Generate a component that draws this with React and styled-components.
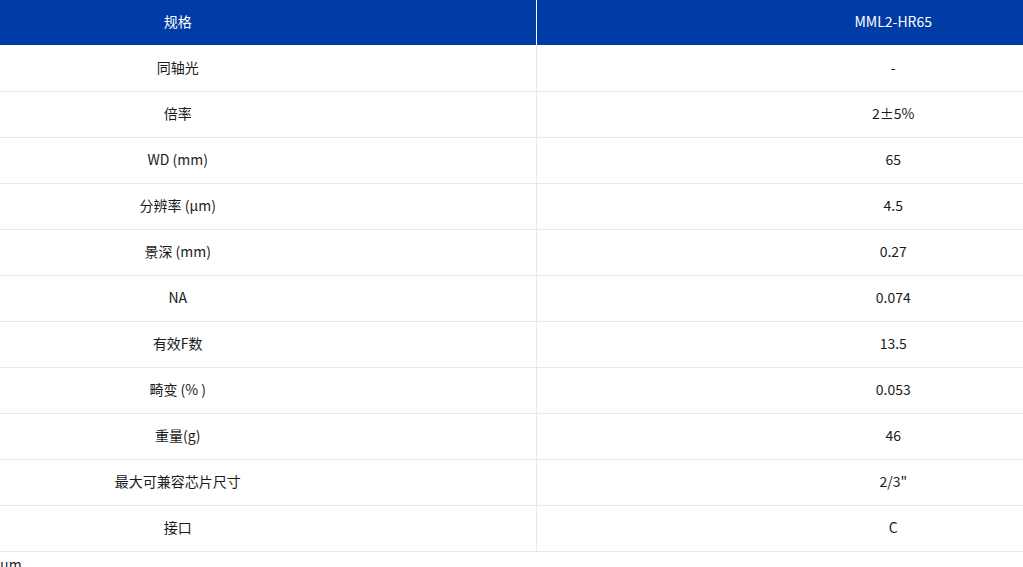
import React from "react";
import styled, { createGlobalStyle } from "styled-components";

const Global = createGlobalStyle`
  html, body { margin: 0; padding: 0; background: #fff; overflow: hidden; }
  body { font-family: "Noto Sans CJK SC", "Noto Sans", sans-serif; color: #222; }
`;

const Page = styled.div`
  width: 1023px;
  height: 567px;
  overflow: hidden;
`;

const Table = styled.table`
  width: 1430px;
  margin-left: -180px;
  border-collapse: collapse;
  table-layout: fixed;
  font-size: 14px;
  line-height: 20px;
`;

const HeadRow = styled.tr`
  border-bottom: 1px solid #fff;
`;

const HeadCell = styled.th`
  height: 42px;
  padding: 0 0 3px;
  background: #003ca5;
  color: #fff;
  font-weight: 400;
  text-align: center;
  border-left: ${(p) => (p.$first ? "none" : "1px solid #fff")};
`;

const Row = styled.tr`
  border-bottom: 1px solid #e8e8e8;
`;

const Cell = styled.td`
  height: 42px;
  padding: 0 0 3px;
  text-align: center;
  color: #1a1a1a;
  border-left: ${(p) => (p.$first ? "none" : "1px solid #e8e8e8")};
`;

const Note = styled.div`
  font-size: 14px;
  line-height: 20px;
  padding-top: 2px;
  color: #222;
`;

const rows = [
  ["同轴光", "-"],
  ["倍率", "2±5%"],
  ["WD (mm)", "65"],
  ["分辨率 (μm)", "4.5"],
  ["景深 (mm)", "0.27"],
  ["NA", "0.074"],
  ["有效F数", "13.5"],
  ["畸变 (% )", "0.053"],
  ["重量(g)", "46"],
  ["最大可兼容芯片尺寸", "2/3\""],
  ["接口", "C"],
];

export default function App() {
  return (
    <Page>
      <Global />
      <Table>
        <colgroup>
          <col style={{ width: "716px" }} />
          <col />
        </colgroup>
        <thead>
          <HeadRow>
            <HeadCell $first>规格</HeadCell>
            <HeadCell>MML2-HR65</HeadCell>
          </HeadRow>
        </thead>
        <tbody>
          {rows.map(([k, v]) => (
            <Row key={k}>
              <Cell $first>{k}</Cell>
              <Cell>{v}</Cell>
            </Row>
          ))}
        </tbody>
      </Table>
      <Note>μm</Note>
    </Page>
  );
}
